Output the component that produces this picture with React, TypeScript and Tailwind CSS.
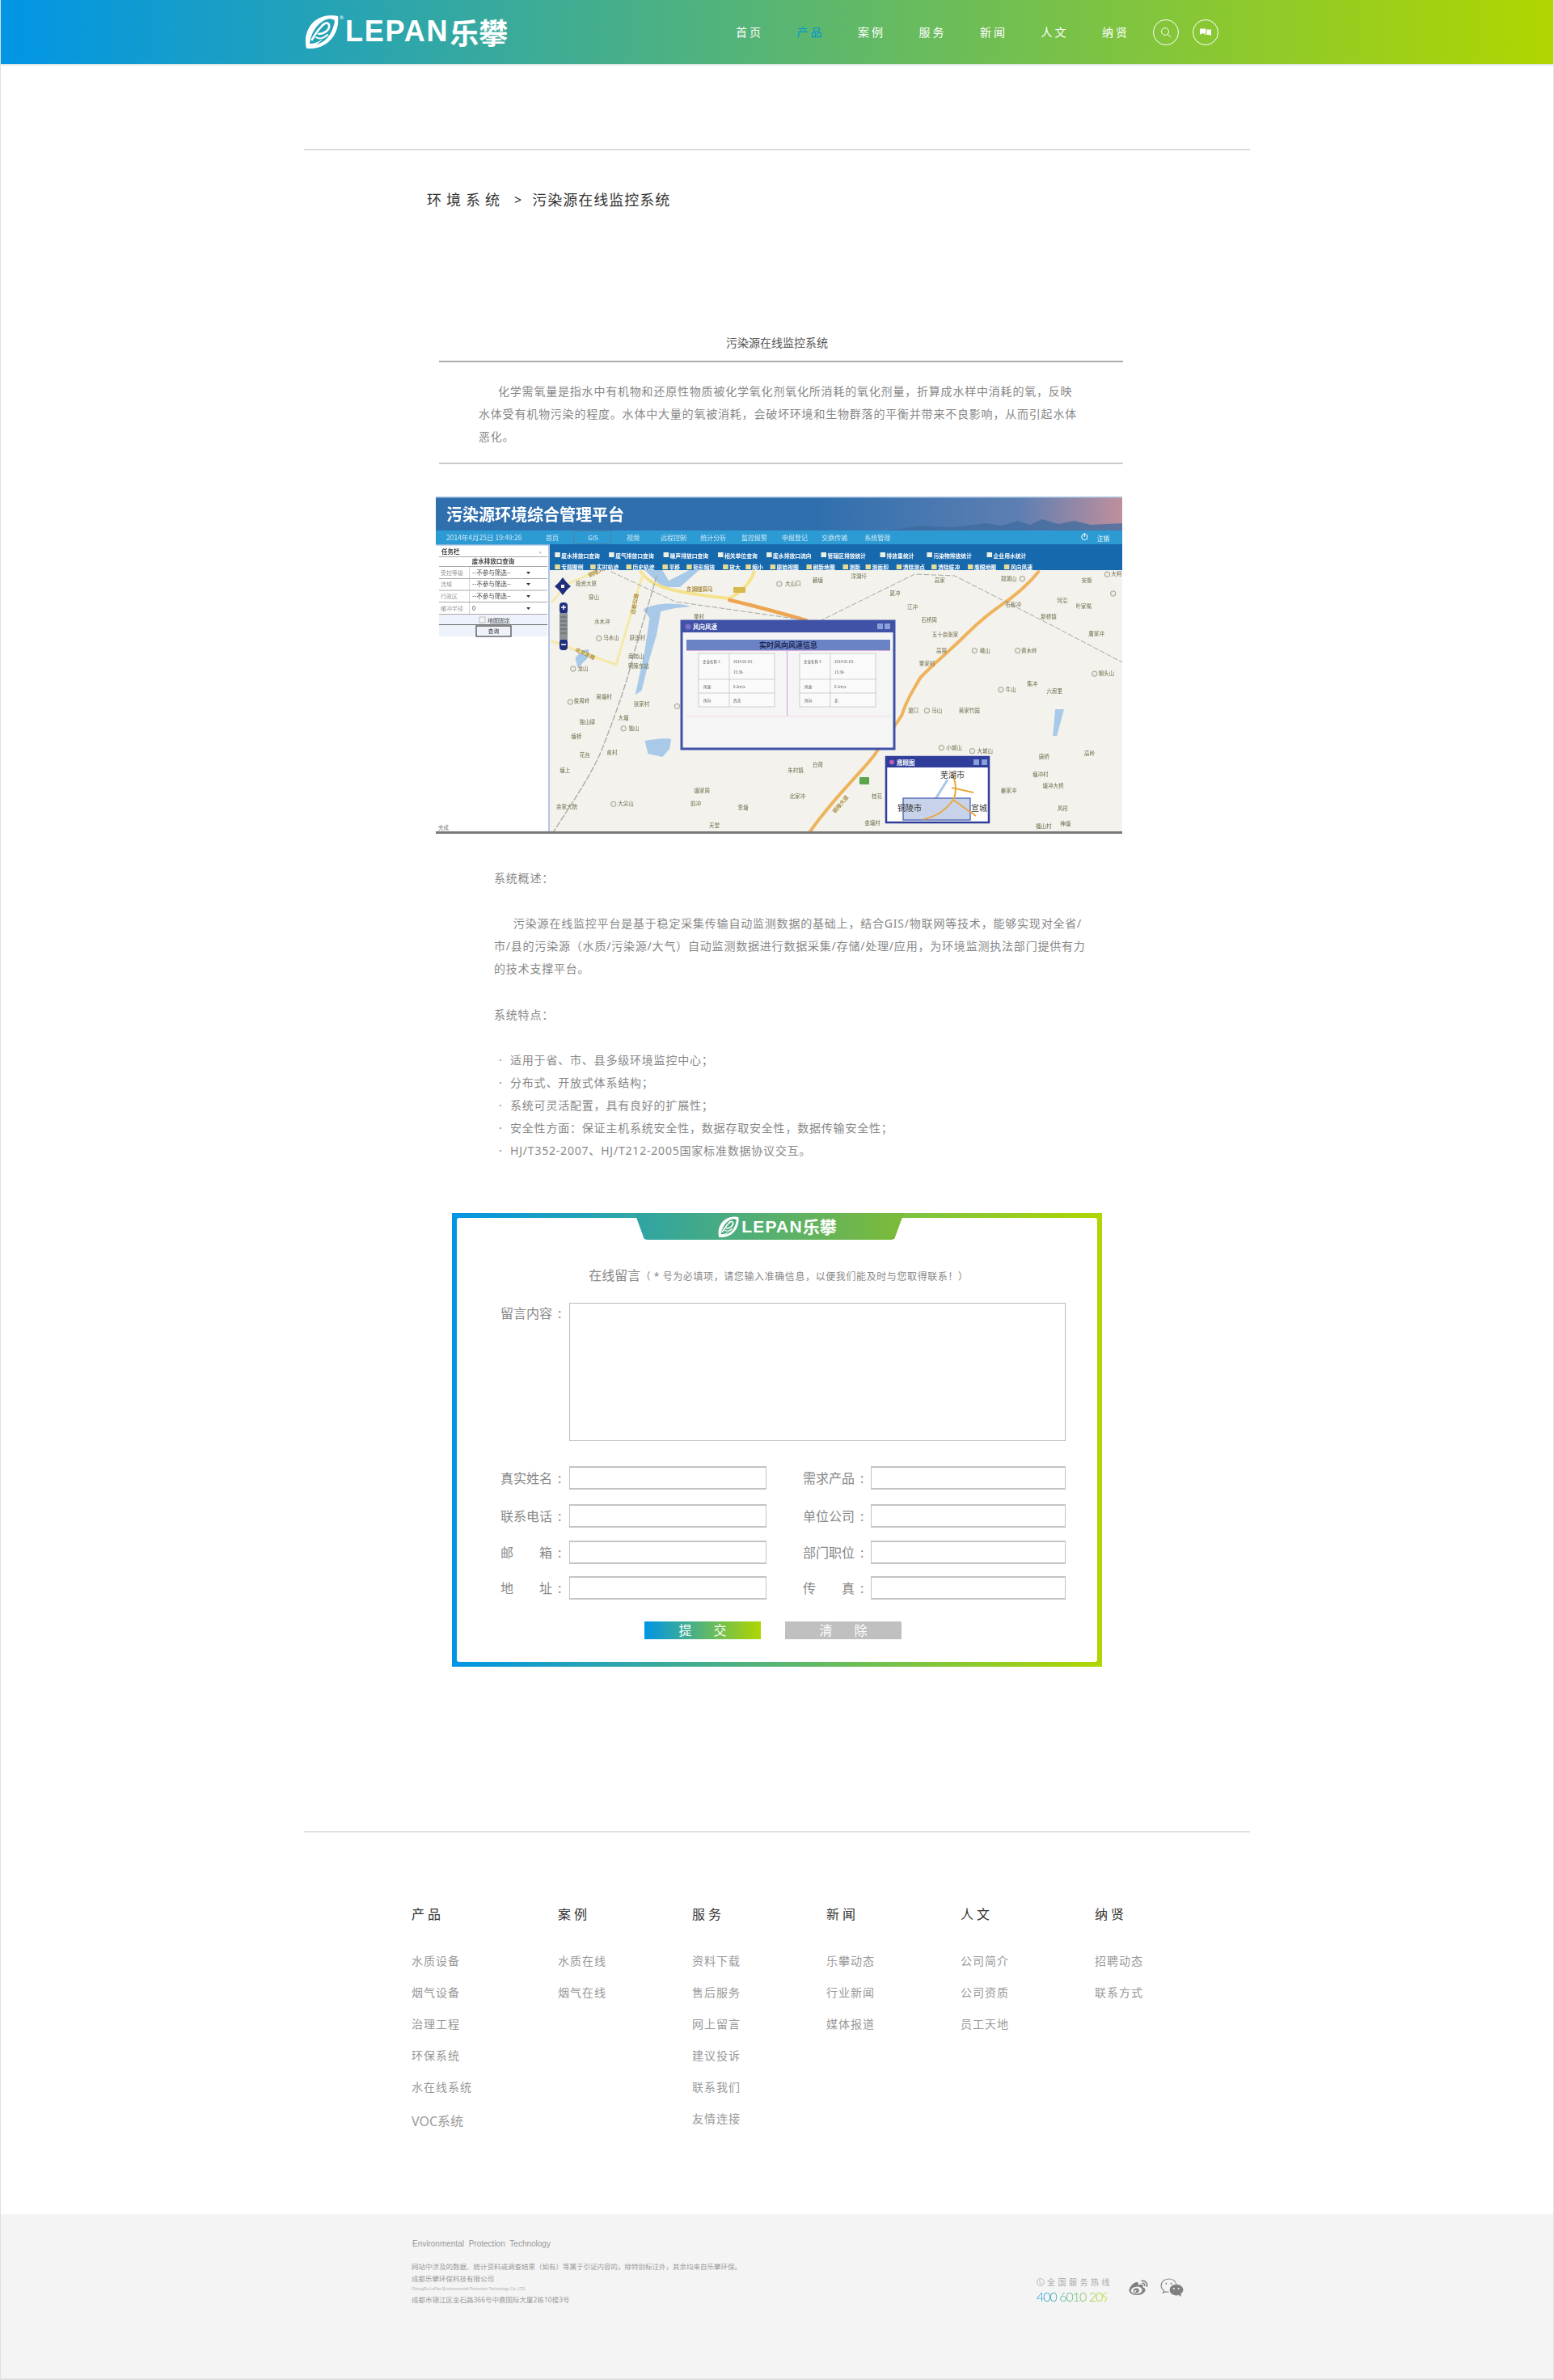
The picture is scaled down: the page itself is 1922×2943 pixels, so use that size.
import { FaWeibo } from "react-icons/fa"

const navItems = ["首页", "产品", "案例", "服务", "新闻", "人文", "纳贤"]

const footerCols = [
  { title: "产品", w: "w-[181px]", links: ["水质设备", "烟气设备", "治理工程", "环保系统", "水在线系统", "VOC系统"] },
  { title: "案例", w: "w-[166px]", links: ["水质在线", "烟气在线"] },
  { title: "服务", w: "w-[166px]", links: ["资料下载", "售后服务", "网上留言", "建议投诉", "联系我们", "友情连接"] },
  { title: "新闻", w: "w-[166px]", links: ["乐攀动态", "行业新闻", "媒体报道"] },
  { title: "人文", w: "w-[166px]", links: ["公司简介", "公司资质", "员工天地"] },
  { title: "纳贤", w: "w-[166px]", links: ["招聘动态", "联系方式"] },
]

const features = [
  "适用于省、市、县多级环境监控中心；",
  "分布式、开放式体系结构；",
  "系统可灵活配置，具有良好的扩展性；",
  "安全性方面：保证主机系统安全性，数据存取安全性，数据传输安全性；",
  "HJ/T352-2007、HJ/T212-2005国家标准数据协议交互。",
]

const formRows = [
  { mt: "mt-[31px]", l: ["真", "实", "姓", "名"], r: ["需", "求", "产", "品"] },
  { mt: "mt-[18px]", l: ["联", "系", "电", "话"], r: ["单", "位", "公", "司"] },
  { mt: "mt-4", l: ["邮", "箱"], r: ["部", "门", "职", "位"] },
  { mt: "mt-[15px]", l: ["地", "址"], r: ["传", "真"] },
]

// zoomed crop coordinates -> picture coordinates
const ix = (z: number) => z / 1.78 - 19
const iy = (z: number) => z / 2.44 - 214

const mapLabels: [number, number, string][] = [
  [365, 786, "投资大厦"], [820, 786, "大山口"], [875, 775, "藕塘"], [965, 763, "洋湖圩"], [1143, 775, "高家"],
  [1295, 770, "观湖山"], [1467, 775, "安衡"], [1532, 757, "大柯"], [1045, 815, "夏冲"], [382, 826, "穿山"],
  [1083, 857, "江冲"], [1413, 838, "河沿"], [1460, 853, "叶家嘴"], [1305, 850, "石板冲"], [1383, 886, "新桥镇"],
  [1120, 895, "石桥周"], [613, 885, "董村"], [400, 900, "水木冲"], [1155, 940, "五十亩张家"], [1488, 938, "庸家冲"],
  [1147, 987, "高周"], [1243, 987, "峨山"], [1340, 987, "黄木岭"], [420, 950, "乌木山"], [478, 948, "跃进村"],
  [475, 1005, "南岗山"], [480, 1035, "铜陵东站"], [358, 1042, "龙山"], [1115, 1027, "董家村"], [1510, 1057, "钢头山"],
  [1347, 1088, "集冲"], [1300, 1105, "牛山"], [1396, 1109, "六房里"], [355, 1140, "俊周岭"], [404, 1128, "吴塘村"],
  [487, 1150, "张家村"], [1137, 1168, "马山"], [1208, 1168, "吴家竹园"], [1085, 1168, "渡口"], [367, 1203, "独山绿"],
  [447, 1190, "大塘"], [470, 1222, "独山"], [343, 1248, "塘桥"], [362, 1302, "花台"], [422, 1295, "俞村"],
  [1175, 1280, "小城山"], [1243, 1290, "大城山"], [1373, 1309, "唐桥"], [1473, 1298, "高岭"], [318, 1350, "塘上"],
  [875, 1333, "白荷"], [826, 1350, "朱村镇"], [1295, 1411, "姜家冲"], [1365, 1362, "塘冲村"], [1393, 1396, "塘冲大桥"],
  [620, 1410, "塘家周"], [830, 1428, "北家冲"], [606, 1450, "前冲"], [452, 1450, "大尖山"], [322, 1458, "余家大院"],
  [710, 1462, "李塘"], [1414, 1465, "风形"], [647, 1515, "天堂"], [995, 1508, "金塘村"], [1372, 1518, "福山村"],
  [1420, 1510, "神塘"], [1005, 1428, "桂花"],
]

const mapPois: [number, number][] = [
  [790, 786], [1325, 770], [1512, 757], [1525, 815], [393, 950], [1220, 987], [1315, 987], [336, 1042],
  [1484, 1057], [1278, 1105], [330, 1142], [1115, 1168], [447, 1222], [1147, 1280], [1215, 1290], [425, 1450], [565, 1155],
]

const sysNav: [number, string][] = [
  [290, "首页"], [380, "GIS"], [468, "视频"], [557, "远程控制"], [645, "统计分析"], [735, "监控报警"], [824, "申报登记"], [912, "交换传输"], [1006, "系统管理"],
]

const tools1: [number, string][] = [
  [296, "废水排放口查询"], [415, "废气排放口查询"], [535, "噪声排放口查询"], [655, "相关单位查询"], [762, "废水排放口流向"],
  [882, "管辖区排放统计"], [1012, "排放量统计"], [1115, "污染物排放统计"], [1247, "企业用水统计"],
]

const tools2: [number, string][] = [
  [296, "专题图例"], [374, "实时轨迹"], [453, "历史轨迹"], [533, "平移"], [586, "矩形缩放"], [666, "放大"], [716, "缩小"], [770, "原始视图"],
  [850, "刷新地图"], [930, "测距"], [980, "测面积"], [1048, "清除测点"], [1125, "清除缓冲"], [1205, "鹰眼地图"], [1285, "风向风速"],
]

const filters: [number, string, string][] = [
  [94, "受控等级", "--不参与筛选--"],
  [108, "流域", "--不参与筛选--"],
  [123, "行政区", "--不参与筛选--"],
  [138, "缓冲半径", "0"],
]

function WindTable({ x, vals }: { x: number; vals: string[] }) {
  return (
    <g fontSize="4.5" fill="#555">
      <rect x={x} y="194" width="94" height="66" fill="#fafafa" stroke="#bbb" strokeWidth="0.7" />
      <path d={`M${x + 38} 194V260M${x} 226H${x + 94}M${x} 243H${x + 94}`} stroke="#bbb" strokeWidth="0.7" />
      <text x={x + 5} y="206">{vals[0]}</text>
      <text x={x + 43} y="206">2014-01-03-</text>
      <text x={x + 43} y="219">15:30-</text>
      <text x={x + 6} y="237">风速-</text>
      <text x={x + 43} y="237">{vals[1]}</text>
      <text x={x + 6} y="254">风向-</text>
      <text x={x + 43} y="254">{vals[2]}</text>
    </g>
  )
}

// drawn copy of the monitoring platform screenshot
function PlatformShot() {
  return (
    <svg viewBox="0 0 849 417" className="block w-[849px] h-[417px] blur-[0.35px]" fontFamily="'Noto Sans CJK SC', sans-serif">
      <defs>
        <linearGradient id="sky" x1="0" x2="1" y1="0" y2="0">
          <stop offset="0.55" stopColor="#2f6fae" />
          <stop offset="0.85" stopColor="#5d7fb2" />
          <stop offset="1" stopColor="#c08f9c" />
        </linearGradient>
      </defs>
      <rect width="849" height="42" fill="url(#sky)" />
      <rect width="849" height="1.5" fill="#a9c3e0" />
      <path d="M560 42L600 36L640 38L680 33L700 36L720 30L735 35L750 28L770 34L790 30L810 35L849 33V42Z" fill="#3d6b9f" opacity="0.75" />
      <text x="13" y="30" fontSize="20" fontWeight="700" fill="#fff">污染源环境综合管理平台</text>

      <rect y="42" width="849" height="17" fill="#2c9bd4" />
      <text x="13" y="54" fontSize="8.5" fill="#cfe8f6">2014年4月25日  19:49:26</text>
      {sysNav.map(([x, t]) => (
        <text key={t} x={ix(x)} y="54" fontSize="8" fill="#cfe8f6" textAnchor="middle">{t}</text>
      ))}
      <rect x={ix(338)} y="43" width="46" height="15.5" fill="none" stroke="#4f7f9e" strokeWidth="0.8" />
      <circle cx={ix(1462)} cy="50" r="3.6" fill="none" stroke="#fff" strokeWidth="1" />
      <path d={`M${ix(1462)} 45V50`} stroke="#fff" strokeWidth="1" />
      <text x={ix(1490)} y="55" fontSize="7.5" fill="#fff">注销</text>

      <rect x="141" y="59" width="708" height="358" fill="#f3f2ec" />

      {/* water and roads, same crop scale as the labels */}
      <g transform="translate(-0.24 0) scale(0.9876 1)">
        <g fill="#a9c9e8">
          <path d="M262 91L284 91L292 104L318 91L330 91L306 112L284 112Z" />
          <path d="M260 140C270 132 300 130 320 136L300 138L282 142L277 170L268 200L258 240L250 245L262 190L268 150Z" />
          <path d="M175 200C178 194 190 186 192 190L190 200L178 212Z" />
          <path d="M262 302C272 300 290 298 295 300L293 312L284 322L266 318Z" />
          <path d="M776 263L787 263L778 296L773 296Z" />
        </g>
        <g fill="none" strokeLinecap="round">
          <path d="M257 93C268 110 290 118 368 126C384 118 395 105 399 93" stroke="#f5e28c" strokeWidth="4" />
          <path d="M146 179L226 208L252 120L260 95" stroke="#f5e9a8" strokeWidth="3" />
          <path d="M146 130L165 108L200 93" stroke="#f5e9a8" strokeWidth="2.5" />
          <path d="M467 417C500 370 530 345 550 319C565 295 575 285 584 270C590 250 598 240 607 224C625 205 645 190 664 171C685 150 700 140 720 126C735 115 745 105 755 93" stroke="#eeb35c" strokeWidth="4" />
          <path d="M368 128C400 135 435 145 464 153" stroke="#eda552" strokeWidth="4.5" />
          <path d="M146 417C170 380 195 345 209 311C225 270 238 235 248 196C258 160 268 130 277 97" stroke="#aaa" strokeWidth="1.4" strokeDasharray="7 3" />
          <path d="M220 93L300 130L464 153M481 154L600 96L650 98L777 162L860 205" stroke="#a6a6a0" strokeWidth="1" strokeDasharray="6 3" />
        </g>
      </g>

      {mapPois.map(([x, y]) => (
        <circle key={`${x}-${y}`} cx={ix(x)} cy={iy(y)} r="3.2" fill="#eeece2" stroke="#8b8778" strokeWidth="0.8" />
      ))}
      <g fontSize="6.5" fill="#6f6c4c">
        {mapLabels.map(([x, y, t]) => (
          <text key={t} x={ix(x)} y={iy(y) + 2} textAnchor="middle">{t}</text>
        ))}
      </g>
      <g fontSize="6.5" fill="#a98a3d" fontWeight="700">
        <text x="190" y="100" transform="rotate(-25 190 100)">铜陵大道</text>
        <text x="246" y="146" transform="rotate(-80 246 146)">迈新公路</text>
        <text x="172" y="191" transform="rotate(25 172 191)">北京东路</text>
        <text x="310" y="117">东湖隧洞马</text>
        <text x="494" y="392" transform="rotate(-50 494 392)">铜陵大道</text>
      </g>
      <rect x="368" y="112" width="15" height="7" rx="1" fill="#d8b84a" />
      <rect x="524" y="347" width="12" height="9" rx="1" fill="#5ca54a" />

      {/* map controls */}
      <g fill="#1f2f7e">
        <path d="M157 100L164 109H150Z" />
        <path d="M157 122L164 113H150Z" />
        <path d="M147 111L155 104V118Z" />
        <path d="M167 111L159 104V118Z" />
        <rect x="153" y="131" width="10" height="14" rx="4" />
        <rect x="153" y="176" width="10" height="14" rx="4" />
      </g>
      <rect x="153" y="144" width="10" height="33" fill="#8c9296" />
      <path d="M154 149H162M154 154H162M154 159H162M154 164H162M154 169H162" stroke="#555" strokeWidth="0.8" />
      <path d="M155 137H161M158 134V140M155 183H161" stroke="#fff" strokeWidth="1.4" />

      {/* left panel */}
      <rect y="59" width="141" height="358" fill="#fff" />
      <rect x="139" y="59" width="2" height="358" fill="#b4c6e4" />
      <rect y="59" width="141" height="1.5" fill="#8ab8dc" />
      <text x="7" y="71" fontSize="7.5" fontWeight="700" fill="#444">任务栏</text>
      <text x="128" y="71" fontSize="6" fill="#4a8cc8">«</text>
      <text x="71" y="83" fontSize="7.5" fontWeight="700" fill="#444" textAnchor="middle">废水排放口查询</text>
      {[74, 86, 101, 115.5, 130, 145].map((y) => (
        <rect key={y} x="4" y={y} width="134" height="1" fill="#a8a8a8" />
      ))}
      <rect x="4" y="146" width="134" height="27" fill="#eef2fa" />
      <rect x="4" y="158" width="134" height="1" fill="#666" />
      {filters.map(([y, l, v]) => (
        <g key={y}>
          <text x="6" y={y + 2.5} fontSize="7" fill="#999">{l}</text>
          <path d={`M41.5 ${y - 7}V${y + 7}`} stroke="#bbb" strokeWidth="0.7" />
          <text x="45" y={y + 2.5} fontSize="7.5" fill="#444">{v}</text>
          <path d={`M112 ${y - 1}H117L114.5 ${y + 2}Z`} fill="#333" />
        </g>
      ))}
      <rect x="54" y="149" width="7" height="7" fill="#f5f5f5" stroke="#aaa" strokeWidth="0.7" />
      <text x="64" y="156" fontSize="7" fill="#444">地图固定</text>
      <rect x="50" y="160" width="43" height="13" fill="#eef2fa" stroke="#444" strokeWidth="1.2" />
      <text x="71.5" y="169" fontSize="7" fill="#333" textAnchor="middle">查询</text>
      <text x="3" y="412" fontSize="6.5" fill="#777">完成</text>

      {/* toolbar */}
      <rect x="141" y="59" width="708" height="32" fill="#1769ae" />
      {tools1.map(([x, t]) => (
        <g key={t}>
          <rect x={ix(x)} y="69" width="6.5" height="6" fill="#e8f1e2" />
          <text x={ix(x) + 8} y="76" fontSize="6.8" fontWeight="700" fill="#fff">{t}</text>
        </g>
      ))}
      {tools2.map(([x, t]) => (
        <g key={t}>
          <rect x={ix(x)} y="84" width="6.5" height="6" fill="#e6dc96" />
          <text x={ix(x) + 8} y="90" fontSize="6.8" fontWeight="700" fill="#fff">{t}</text>
        </g>
      ))}

      {/* wind popup */}
      <rect x="304" y="154" width="263" height="158" fill="#f5f5f5" stroke="#3f52a8" strokeWidth="3" />
      <rect x="304" y="154" width="263" height="14" fill="#3f52a8" />
      <circle cx="312" cy="161" r="3.5" fill="#7a6fc0" />
      <text x="318" y="164" fontSize="7.5" fill="#fff" fontWeight="700">风向风速</text>
      <rect x="546" y="157" width="7" height="7" fill="#8aa0d8" />
      <rect x="555" y="157" width="7" height="7" fill="#8aa0d8" />
      <rect x="310" y="177" width="252" height="13" fill="#6a83c4" />
      <rect x="310" y="190" width="252" height="1" fill="#dca9dc" />
      <text x="436" y="187" fontSize="9" fontWeight="700" fill="#1c2450" textAnchor="middle">实时风向风速信息</text>
      <rect x="434" y="191" width="1" height="80" fill="#c9a5d4" />
      <rect x="310" y="271" width="252" height="1" fill="#eed8ea" />
      <WindTable x={325} vals={["企业名称 1-", "0.2m/s-", "西北-"]} />
      <WindTable x={450} vals={["企业名称 3-", "0.1m/s-", "北-"]} />

      {/* eagle eye popup */}
      <rect x="557" y="322" width="127" height="81" fill="#fff" stroke="#2f3e9a" strokeWidth="2.5" />
      <rect x="557" y="322" width="127" height="13" fill="#2f3e9a" />
      <circle cx="564" cy="328.5" r="3" fill="#c060b0" />
      <text x="570" y="332" fontSize="7.5" fill="#fff" fontWeight="700">鹰眼图</text>
      <rect x="665" y="325" width="7" height="7" fill="#8aa0d8" />
      <rect x="675" y="325" width="7" height="7" fill="#8aa0d8" />
      <path d="M618 374L633 350" stroke="#a9c9e8" strokeWidth="3" fill="none" />
      <rect x="578" y="373" width="83" height="27" fill="#c8d2ea" stroke="#3a55a8" strokeWidth="1.2" />
      <path d="M603 399C623 395 633 385 640 375C645 365 643 350 638 342M638 360L665 366M640 375L668 395" stroke="#e8a93f" strokeWidth="2" fill="none" />
      <text x="624" y="348" fontSize="10" fill="#333">芜湖市</text>
      <text x="571" y="389" fontSize="10" fill="#333">铜陵市</text>
      <text x="662" y="389" fontSize="10" fill="#333">宣城</text>

      <rect y="414" width="849" height="3" fill="#7b7b7b" />
    </svg>
  )
}

function LogoEmblem({ className }: { className: string }) {
  return (
    <svg viewBox="0 0 42 42" className={className}>
      <path
        fillRule="evenodd"
        fill="#fff"
        d="M2 42C-2 26 5 7 24 2C30 0.5 36 0.5 41 2C43 18 35 34 19 40C13 42 7 42.5 2 42ZM6 36C12 36 17 34 22 30C20 33 17 35.5 14 37C24 35 34 26 37 8C36 6 33 5 29 5.5C18 8 8 20 6 36Z"
      />
      <path
        fill="none"
        stroke="#fff"
        strokeWidth="2.6"
        strokeLinecap="round"
        d="M9 31C14 22 19 15 25 11M17 24C24 24 31 19 30 13C29 9 24 10 21 14"
      />
      <path fill="none" stroke="#fff" strokeWidth="2" strokeLinecap="round" d="M14 28C18 31 24 29 28 25" />
    </svg>
  )
}

export default function App() {
  return (
    <div className="w-full h-[2943px] bg-white border-x border-b-2 border-[#e0e0e0] font-['Noto_Sans','Noto_Sans_CJK_SC',sans-serif] overflow-hidden">
      {/* header */}
      <header className="h-[81px] bg-linear-to-r/srgb from-[#0095e6] to-[#b0d600] border-b-2 border-[#dfe6e8] -mx-px">
        <div className="w-[1170px] mx-auto flex items-center h-full">
          <div className="relative flex items-center w-[534px] pb-px">
            <LogoEmblem className="w-[42px] h-[42px] ml-px" />
            <span className="absolute left-[44px] top-0 text-[6px] text-white">®</span>
            <span className="ml-2 font-['Liberation_Sans'] font-bold text-[36px] leading-none tracking-[1.8px] text-white">LEPAN</span>
            <span className="ml-px font-['Noto_Sans_CJK_SC'] font-bold text-[36px] leading-none text-white">乐攀</span>
          </div>
          <nav className="flex gap-[43.5px]">
            {navItems.map((item) => (
              <a key={item} className={`w-8 whitespace-nowrap text-sm leading-6 tracking-[3px] ${item === "产品" ? "text-[#0095dd]" : "text-white"}`}>{item}</a>
            ))}
          </nav>
          <div className="ml-[31px] flex gap-[17px]">
            <div className="w-8 h-8 rounded-full border border-white flex items-center justify-center">
              <svg viewBox="0 0 16 16" className="w-4 h-4" fill="none" stroke="#fff" strokeWidth="1">
                <circle cx="7" cy="7" r="4.5" />
                <path d="M10.2 10.2L14 14" />
              </svg>
            </div>
            <div className="w-8 h-8 rounded-full border border-white flex items-center justify-center">
              <svg viewBox="0 0 16 10" className="w-4 h-[10px]" fill="#fff">
                <path d="M1 0.5H8.5V6.5H3L1 8Z" />
                <path d="M9.5 1.5H15V8V9.5L13 8H6V7.5H9.5Z" />
              </svg>
            </div>
          </div>
        </div>
      </header>

      <main className="w-[1170px] mx-auto">
        <div className="mt-[103px] h-0.5 bg-[#dddddd]" />

        <div className="mt-[49px] ml-[152px] flex items-center h-6 text-lg leading-6 text-[#333]">
          <span className="tracking-[6px]">环境系统</span>
          <span className="ml-3 text-base">&gt;</span>
          <span className="ml-[13px] tracking-[1px]">污染源在线监控系统</span>
        </div>

        {/* article head */}
        <h2 className="mt-[153px] text-center text-sm leading-6 text-[#555]">污染源在线监控系统</h2>
        <div className="mt-2.5 ml-[167px] w-[846px] h-0.5 bg-[#aaaaaa]" />
        <p className="mt-[22px] ml-[216px] w-[745px] text-sm leading-7 tracking-[0.8px] text-[#888] indent-6">
          化学需氧量是指水中有机物和还原性物质被化学氧化剂氧化所消耗的氧化剂量，折算成水样中消耗的氧，反映水体受有机物污染的程度。水体中大量的氧被消耗，会破坏环境和生物群落的平衡并带来不良影响，从而引起水体恶化。
        </p>
        <div className="mt-[18px] ml-[167px] w-[846px] h-0.5 bg-[#cccccc]" />

        <div className="mt-10 ml-[163px] w-[849px]">
          <PlatformShot />
        </div>

        {/* system description */}
        <div className="mt-[41px] ml-[235px] w-[732px] text-sm leading-7 tracking-[0.8px] text-[#888]">
          <p>系统概述：</p>
          <p className="mt-7 indent-6">
            污染源在线监控平台是基于稳定采集传输自动监测数据的基础上，结合GIS/物联网等技术，能够实现对全省/市/县的污染源（水质/污染源/大气）自动监测数据进行数据采集/存储/处理/应用，为环境监测执法部门提供有力的技术支撑平台。
          </p>
          <p className="mt-[29px]">系统特点：</p>
          <ul className="mt-7">
            {features.map((f) => (
              <li key={f} className="flex whitespace-nowrap">
                <span className="w-5 pl-[6px]">·</span>
                {f}
              </li>
            ))}
          </ul>
        </div>

        {/* message form */}
        <section className="relative mt-[63px] ml-[183px] w-[804px] h-[561px] p-[6px] bg-linear-to-r/srgb from-[#0095e6] to-[#b0d600]">
          <div className="absolute left-[226px] top-0 w-[333px] h-[33px] pl-5 bg-linear-to-r/srgb from-[#2ea4a5] to-[#7dbb38] [clip-path:polygon(0_0,100%_0,96.5%_96%,95.5%_100%,4.5%_100%,3.5%_96%)] flex items-center justify-center">
            <LogoEmblem className="w-[26px] h-[26px]" />
            <span className="ml-[3px] font-['Liberation_Sans'] font-bold text-[21px] leading-none tracking-[1.2px] text-white">LEPAN</span>
            <span className="font-['Noto_Sans_CJK_SC'] font-bold text-[21px] leading-none text-white">乐攀</span>
          </div>
          <div className="h-full bg-white rounded-[3px] pt-[59px] text-[#888]">
            <p className="text-center h-6 pl-1 leading-6 text-xs tracking-[0.6px] whitespace-nowrap">
              <span className="text-base tracking-normal">在线留言</span>（ * 号为必填项，请您输入准确信息，以便我们能及时与您取得联系！）
            </p>
            <div className="mt-[22px] ml-[54px] flex">
              <div className="w-[85px] flex text-base leading-6 pt-px">
                <span className="w-16 flex justify-between">
                  {["留", "言", "内", "容"].map((c) => <span key={c}>{c}</span>)}
                </span>
                <span className="ml-[7px]">:</span>
              </div>
              <div className="w-[614px] h-[171px] border border-[#bbbbbb]" />
            </div>
            {formRows.map((row) => (
              <div key={row.l.join("")} className={`${row.mt} ml-[54px] flex items-center h-[29px] text-base`}>
                <div className="w-[85px] flex">
                  <span className="w-16 flex justify-between">
                    {row.l.map((c) => <span key={c}>{c}</span>)}
                  </span>
                  <span className="ml-[7px]">:</span>
                </div>
                <div className="w-[244px] h-full border border-[#c4c4c4] border-t-2 border-b-2" />
                <div className="ml-[45px] w-[84px] flex">
                  <span className="w-16 flex justify-between">
                    {row.r.map((c) => <span key={c}>{c}</span>)}
                  </span>
                  <span className="ml-[7px]">:</span>
                </div>
                <div className="w-[241px] h-full border border-[#c4c4c4] border-t-2 border-b-2" />
              </div>
            ))}
            <div className="mt-[27px] ml-[232px] flex gap-[30px]">
              <button className="w-36 h-[22px] bg-linear-to-r/srgb from-[#0095e6] to-[#b0d600] text-white text-base leading-[22px] tracking-[27px] pl-[27px]">提交</button>
              <button className="w-36 h-[22px] bg-[#c0c0c0] text-white text-base leading-[22px] tracking-[27px] pl-[27px]">清除</button>
            </div>
          </div>
        </section>

        <div className="mt-[203px] h-0.5 bg-[#e2e2e2]" />

        {/* footer links */}
        <div className="mt-[89px] ml-[133px] flex">
          {footerCols.map((col) => (
            <div key={col.title} className={col.w}>
              <h3 className="h-6 text-base leading-6 tracking-[4px] text-[#333]">{col.title}</h3>
              <ul className="mt-[26px] text-sm leading-[39px] tracking-[1px] text-[#999]">
                {col.links.map((l) => (
                  <li key={l} className={l === "VOC系统" ? "h-[39px] pt-1 text-[16px] tracking-normal" : "h-[39px]"}>{l}</li>
                ))}
              </ul>
            </div>
          ))}
        </div>
      </main>

      {/* footer */}
      <footer className="mt-[99px] h-[203px] bg-[#f4f4f4] -mx-px">
        <div className="w-[1170px] mx-auto pl-[133px] pr-[82px] pt-[30px] flex justify-between">
          <div className="text-[#999]">
            <p className="font-['Liberation_Sans'] text-[10px] leading-[14px] ml-px [word-spacing:3px]">Environmental Protection Technology</p>
            <p className="mt-[15px] text-[8.5px] leading-3 whitespace-nowrap">网站中涉及的数据、统计资料或调查结果（如有）等属于引证内容的，除特别标注外，其余均来自乐攀环保。</p>
            <p className="mt-[3px] text-[8.5px] leading-3">成都乐攀环保科技有限公司</p>
            <p className="font-['Liberation_Sans'] text-[5px] leading-3 text-[#b0b0b0]">ChengDu LePan Environmental Protection Technology Co.,LTD</p>
            <p className="mt-[2px] text-[8.5px] leading-3">成都市锦江区金石路366号中鼎国际大厦2栋10楼3号</p>
          </div>
          <div className="pt-[48px] flex">
            <div className="w-[87px]">
              <p className="flex items-center h-3 text-[10px] leading-3 tracking-[3.5px] text-[#aaa] whitespace-nowrap">
                <svg viewBox="0 0 12 12" className="w-[10px] h-[10px] mr-[3px] shrink-0" fill="none" stroke="#aaa" strokeWidth="1">
                  <circle cx="6" cy="6" r="5.2" />
                  <path d="M4 3L5 5L4.6 6C5 7 6 8 7 8.4L8.2 8" />
                </svg>
                全国服务热线
              </p>
              <p className="mt-[2px] font-['Lato'] font-light text-base leading-5 tracking-[-1px] whitespace-nowrap bg-linear-to-r/srgb from-[#0095e6] to-[#b0d600] bg-clip-text text-transparent">400 6010 209</p>
            </div>
            <FaWeibo className="ml-[25px] mt-[2px] w-[28px] h-[23px] text-[#808080]" />
            <svg viewBox="0 0 30 25" className="ml-[13px] mt-px w-[29px] h-[24px]">
              <path d="M11 1C5.5 1 1 4.8 1 9.5C1 12.2 2.4 14.4 4.6 16L3.6 19L7.2 17.4C8.3 17.8 9.5 18 11 18" fill="none" stroke="#808080" strokeWidth="1.2" />
              <path d="M11 1C15.6 1 19.5 3.8 20.6 7.5" fill="none" stroke="#808080" strokeWidth="1.2" />
              <circle cx="7.5" cy="7" r="1" fill="#808080" />
              <circle cx="14" cy="7" r="1" fill="#808080" />
              <path d="M20.5 8C15.8 8 12 11.2 12 15.2C12 19.2 15.8 22.4 20.5 22.4C21.6 22.4 22.6 22.2 23.6 21.9L27 24L26.2 20.6C28.2 19.2 29.5 17.3 29.5 15.2C29.5 11.2 25.5 8 20.5 8Z" fill="#808080" />
              <circle cx="17.5" cy="13.5" r="1.1" fill="#f4f4f4" />
              <circle cx="23.5" cy="13.5" r="1.1" fill="#f4f4f4" />
            </svg>
          </div>
        </div>
      </footer>
    </div>
  )
}
